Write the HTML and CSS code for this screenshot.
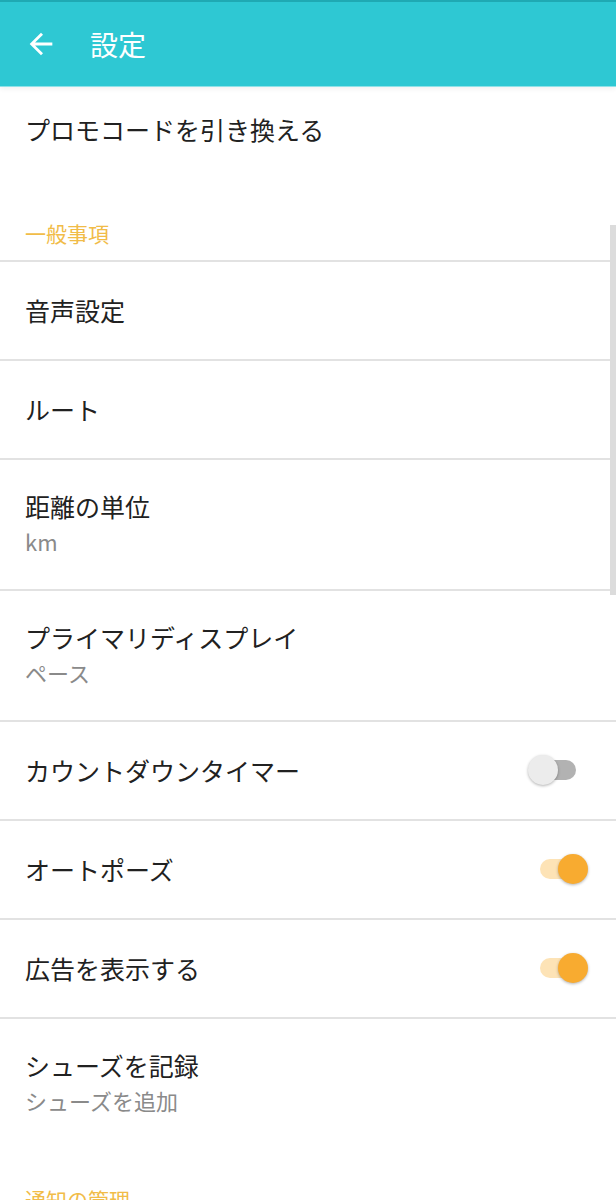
FILE: index.html
```html
<!DOCTYPE html>
<html lang="ja">
<head>
<meta charset="utf-8">
<link rel="stylesheet" href="styles.css">
</head>
<body>
<div class="screen">
  <header class="appbar">
    <svg class="back" viewBox="0 0 24 24" width="34" height="34"><path fill="#fff" d="M20 11H7.83l5.59-5.59L12 4l-8 8 8 8 1.41-1.41L7.83 13H20v-2z"/></svg>
    <h1 class="title">設定</h1>
  </header>
  <div class="promo">プロモコードを引き換える</div>
  <div class="section">一般事項</div>
  <div class="list">
    <div class="row"><span class="label">音声設定</span></div>
    <div class="row"><span class="label">ルート</span></div>
    <div class="row two"><span class="label">距離の単位</span><span class="sub">km</span></div>
    <div class="row two"><span class="label">プライマリディスプレイ</span><span class="sub">ペース</span></div>
    <div class="row"><span class="label">カウントダウンタイマー</span><span class="switch off"><span class="track"></span><span class="knob"></span></span></div>
    <div class="row"><span class="label">オートポーズ</span><span class="switch on"><span class="track"></span><span class="knob"></span></span></div>
    <div class="row"><span class="label">広告を表示する</span><span class="switch on"><span class="track"></span><span class="knob"></span></span></div>
    <div class="row two last"><span class="label">シューズを記録</span><span class="sub">シューズを追加</span></div>
  </div>
  <div class="section section2">通知の管理</div>
  <div class="scrollbar"></div>
</div>
</body>
</html>
```
FILE: styles.css
```css
* { box-sizing: border-box; }
html, body { margin: 0; padding: 0; background: #fff; }
body { font-family: "Noto Sans CJK JP", "Noto Sans", Roboto, sans-serif; color: #212121; }
.screen { position: relative; width: 616px; height: 1200px; overflow: hidden; background: #fff; }
.appbar {
  height: 86px;
  background: #2ec8d3;
  border-top: 2px solid #1fa9b3;
  display: flex;
  align-items: center;
  box-shadow: 0 1px 0 #8fe2e8, 0 3px 5px rgba(0,0,0,0.06);
  position: relative;
  z-index: 1;
}
.back { margin-left: 24px; flex: none; }
.title { margin: 0 0 0 32px; font-size: 28px; font-weight: 400; color: #fff; line-height: 1; }
.promo { height: 88px; padding-left: 25px; padding-bottom: 2px; display: flex; align-items: center; font-size: 25px; }
.section { padding: 45px 0 13px 25px; font-size: 21px; line-height: 28px; color: #f1bc48; border-bottom: 2px solid #e2e2e2; }
.section2 { padding-top: 36px; border-bottom: none; }
.list { display: flex; flex-direction: column; }
.row {
  height: 99px;
  border-bottom: 2px solid #e2e2e2;
  display: flex;
  align-items: center;
  justify-content: space-between;
  padding: 0 28px 2px 25px;
}
.row.two { height: 131px; flex-direction: column; align-items: flex-start; justify-content: flex-start; padding-top: 29px; padding-bottom: 0; }
.row.last { height: 130px; border-bottom: none; }
.label { font-size: 25px; line-height: 34px; }
.sub { font-size: 22px; line-height: 36px; color: #8a8a8a; }
.switch { position: relative; width: 60px; height: 32px; flex: none; }
.track { position: absolute; left: 12px; right: 12px; top: 6px; height: 20px; border-radius: 10px; }
.knob { position: absolute; top: 1px; width: 30px; height: 30px; border-radius: 50%; box-shadow: 0 1px 3px rgba(0,0,0,0.3); }
.switch.off .track { background: #b2b2b2; }
.switch.off .knob { left: 0; background: #ececec; }
.switch.on .track { background: #fde3b6; }
.switch.on .knob { right: 0; background: #f8ab30; }
.scrollbar { position: absolute; right: 0; top: 225px; width: 6px; height: 370px; background: #dcdcdc; }
```
